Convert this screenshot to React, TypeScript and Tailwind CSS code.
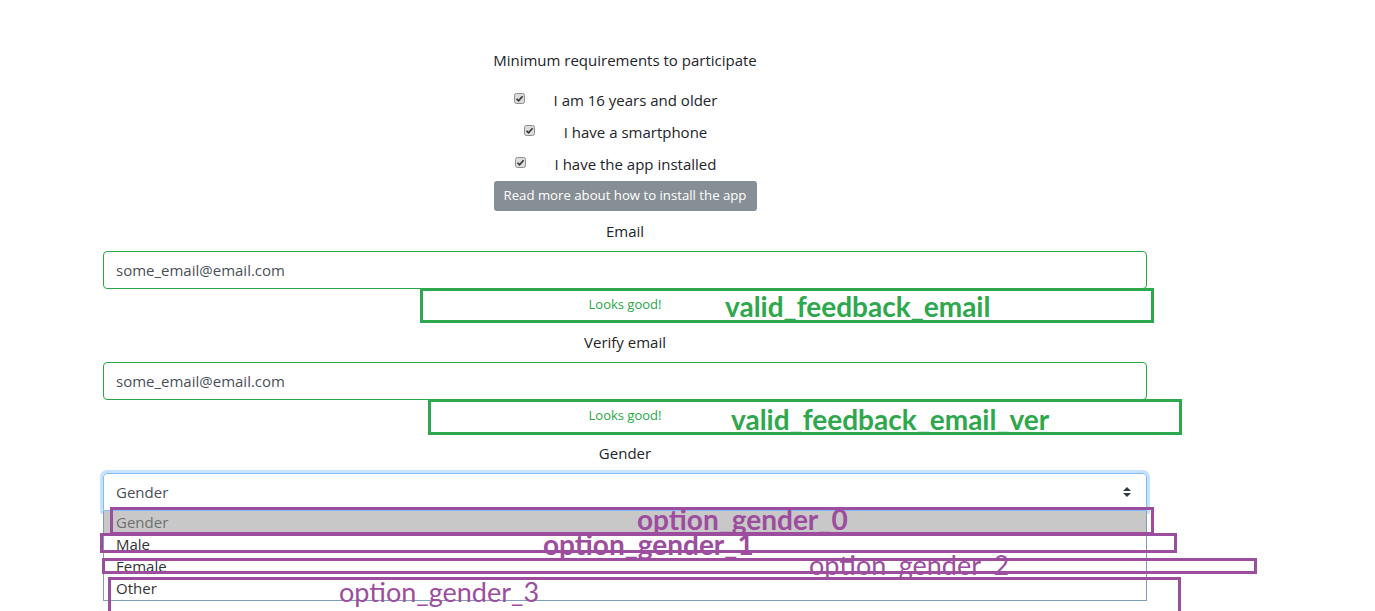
import React from 'react';

const CheckMark = () => (
  <svg width="11" height="11" viewBox="0 0 11 11" className="shrink-0">
    <rect x="0.5" y="0.5" width="10" height="10" rx="2" fill="#dcdcdc" stroke="#8f8f8f" />
    <path d="M2.5 5.8 L4.5 7.8 L8.6 3.2" fill="none" stroke="#333" strokeWidth="1.6" />
  </svg>
);

const requirements = ['I am 16 years and older', 'I have a smartphone', 'I have the app installed'];
const options = ['Gender', 'Male', 'Female', 'Other'];

// Annotation overlay: a coloured frame with its tag name drawn across it
const Annotation = ({
  box,
  label,
  labelPos,
  tone,
}: {
  box: string;
  label: string;
  labelPos: string;
  tone: string;
}) => (
  <>
    <div className={`pointer-events-none absolute border-[3px] ${box} ${tone}`} />
    <span className={`pointer-events-none absolute whitespace-nowrap leading-8 font-['Lato',sans-serif] ${labelPos}`}>
      {label}
    </span>
  </>
);

const EmailField = ({ label }: { label: string }) => (
  <div className="flex flex-col gap-2">
    <p className="h-6 text-[15px] leading-6">{label}</p>
    <div className="flex h-[38px] items-center rounded-[4px] border border-[#28a745] px-3 text-left text-[15px] text-[#495057]">
      some_email@email.com
    </div>
  </div>
);

export default function App() {
  return (
    <div className="relative h-[611px] overflow-hidden bg-white font-['Open_Sans',sans-serif] text-[#212529]">
      <div className="ml-[103px] flex w-[1044px] flex-col pt-[48px] text-center">
        <p className="h-6 text-[15px] leading-6">Minimum requirements to participate</p>

        {/* Checkboxes */}
        <div className="mt-3 flex flex-col pr-[19px]">
          {requirements.map((r) => (
            <div key={r} className="flex h-8 items-center justify-center gap-[29px]">
              <span className="-mt-1"><CheckMark /></span>
              <span className="text-[15px] leading-6">{r}</span>
            </div>
          ))}
        </div>

        <button
          type="button"
          className="mx-auto mt-px flex h-[30px] w-[263px] items-center justify-center whitespace-nowrap rounded-[3px] bg-[#868e96] text-[13.2px] text-white"
        >
          Read more about how to install the app
        </button>

        <div className="mt-2">
          <EmailField label="Email" />
        </div>
        <p className="mt-[6px] h-[18px] text-[13px] leading-[18px] text-[#28a745]">Looks good!</p>

        <div className="mt-[17px]">
          <EmailField label="Verify email" />
        </div>
        <p className="mt-[6px] h-[18px] text-[13px] leading-[18px] text-[#28a745]">Looks good!</p>

        {/* Gender select, opened */}
        <p className="mt-[17px] h-6 text-[15px] leading-6">Gender</p>
        <div className="mt-2 flex h-[38px] items-center justify-between rounded-t-[4px] border border-[#80bdff] px-3 text-left text-[15px] text-[#495057] shadow-[0_0_0_3px_rgba(0,123,255,0.22)]">
          <span>Gender</span>
          <svg width="8" height="10" viewBox="0 0 4 5" className="mr-[3px]">
            <path d="M2 0L0 2h4zm0 5L0 3h4z" fill="#343a40" />
          </svg>
        </div>
        <div className="flex h-[90px] flex-col border border-t-0 border-[#7f9db9] bg-white text-left text-[15px]">
          {options.map((o, i) => (
            <div
              key={o}
              className={`flex h-[22px] items-center pl-3 ${i === 0 ? 'bg-[#c8c8c8] text-[#707070]' : 'text-[#333]'}`}
            >
              {o}
            </div>
          ))}
        </div>
      </div>

      <Annotation
        box="left-[420px] top-[288px] h-[35px] w-[734px]"
        tone="border-[#2ea84d]"
        label="valid_feedback_email"
        labelPos="left-[725px] top-[290px] text-[28px] font-bold text-[#2ea84d]"
      />
      <Annotation
        box="left-[428px] top-[399px] h-[36px] w-[754px]"
        tone="border-[#2ea84d]"
        label="valid_feedback_email_ver"
        labelPos="left-[731px] top-[403px] text-[28px] font-bold text-[#2ea84d]"
      />
      <Annotation
        box="left-[110px] top-[507px] h-[28px] w-[1044px]"
        tone="border-[#9c4d9e]"
        label="option_gender_0"
        labelPos="left-[637px] top-[503px] text-[28px] font-bold text-[#9c4d9e]"
      />
      <Annotation
        box="left-[100px] top-[533px] h-[20px] w-[1077px]"
        tone="border-[#9c4d9e]"
        label="option_gender_1"
        labelPos="left-[543px] top-[528px] text-[28px] font-bold text-[#9c4d9e]"
      />
      <Annotation
        box="left-[102px] top-[558px] h-[16px] w-[1155px]"
        tone="border-[#9c4d9e]"
        label="option_gender_2"
        labelPos="left-[809px] top-[549px] text-[27px] text-[#9c4d9e]"
      />
      <Annotation
        box="left-[108px] top-[577px] h-[40px] w-[1073px]"
        tone="border-[#9c4d9e]"
        label="option_gender_3"
        labelPos="left-[339px] top-[576px] text-[27px] text-[#9c4d9e]"
      />
    </div>
  );
}
